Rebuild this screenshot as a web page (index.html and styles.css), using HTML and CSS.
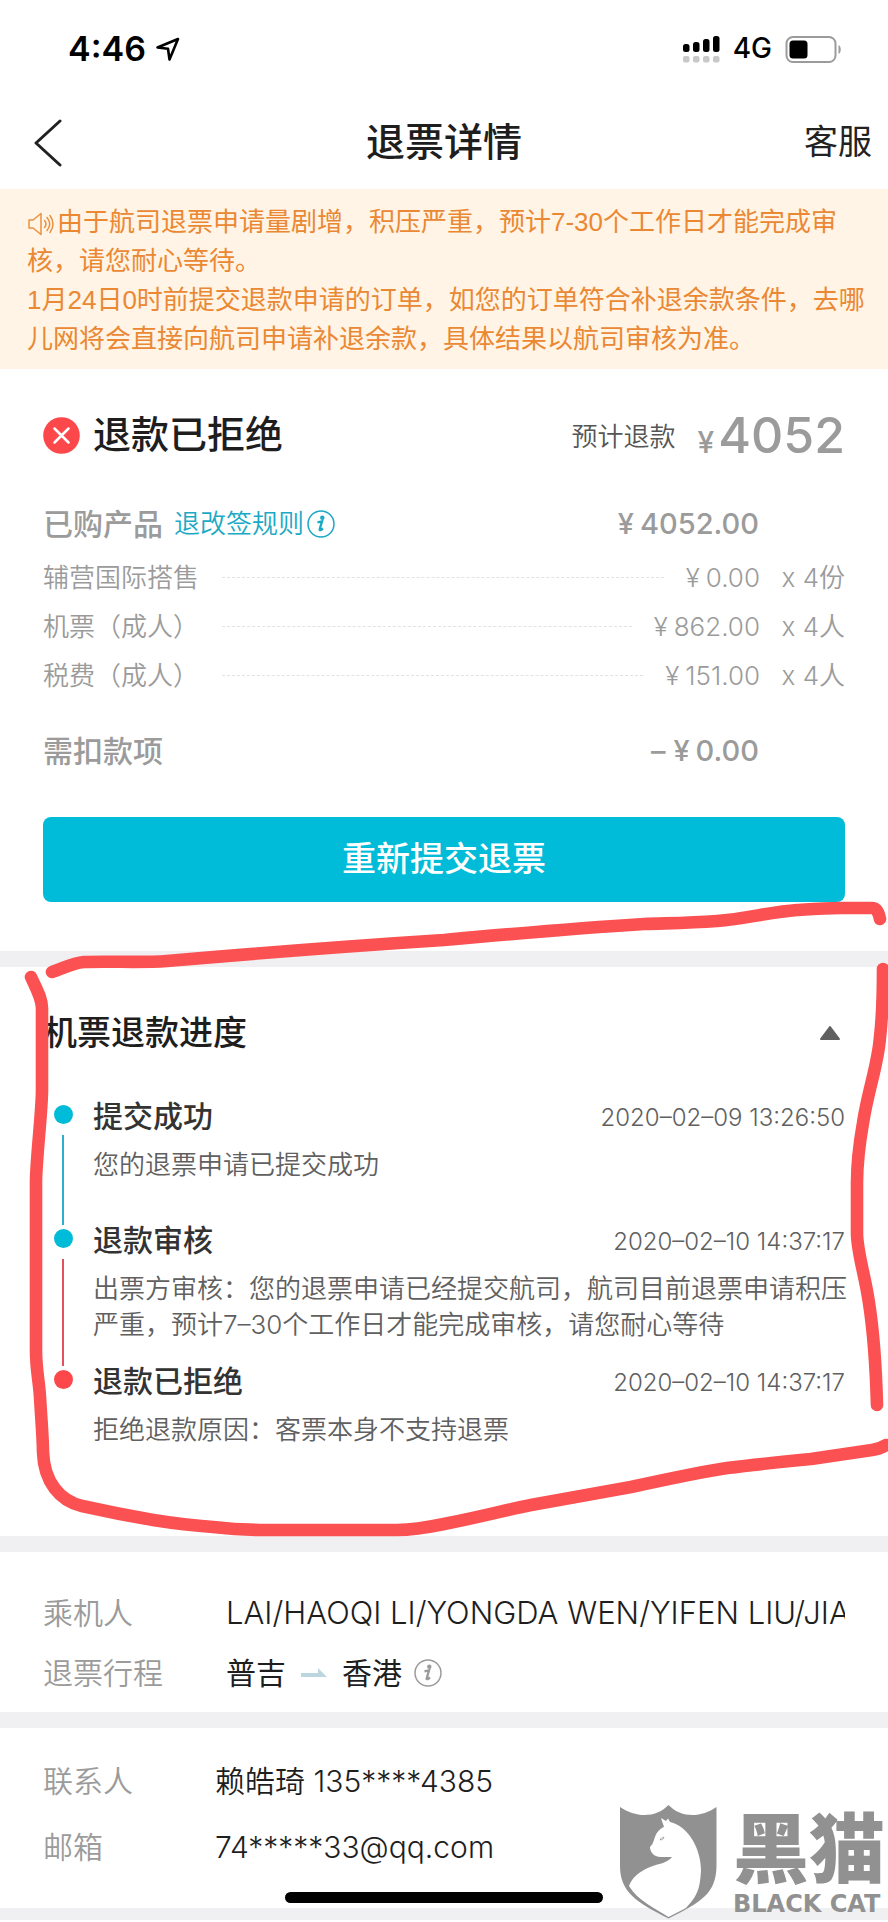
FILE: index.html
```html
<!DOCTYPE html>
<html lang="zh-CN">
<head>
<meta charset="utf-8">
<meta name="viewport" content="width=device-width, initial-scale=1">
<title>退票详情</title>
<link rel="stylesheet" href="styles.css">
</head>
<body>
<div class="page">
  <div class="statusbar">
    <div class="status-left">
      <span class="clock">4:46</span>
      <svg class="locate" width="24" height="24" viewBox="0 0 24 24" fill="none" stroke="#000" stroke-width="2.6" stroke-linejoin="round"><path d="M1.500 10.500 22 2 13.500 22.500 12 11.800Z"/></svg>
    </div>
    <div class="status-right">
      <svg width="38" height="28" viewBox="0 0 38 28"><g fill="#000"><rect x="1" y="9" width="6.500" height="8" rx="2.500"/><rect x="11" y="7" width="6.500" height="10" rx="2.500"/><rect x="21" y="4" width="6.500" height="13" rx="2.500"/><rect x="31" y="1" width="6.500" height="16" rx="2.500"/></g><g fill="#c8c8c8"><rect x="1" y="21" width="6.500" height="6.500" rx="2"/><rect x="11" y="21" width="6.500" height="6.500" rx="2"/><rect x="21" y="21" width="6.500" height="6.500" rx="2"/><rect x="31" y="21" width="6.500" height="6.500" rx="2"/></g></svg>
      <span class="network">4G</span>
      <svg width="57" height="28" viewBox="0 0 57 28"><rect x="1.500" y="2" width="49" height="25" rx="6.500" fill="none" stroke="#9b9b9b" stroke-width="2"/><rect x="4.500" y="5.500" width="18" height="18" rx="3.500"/><path d="M53.500 10c3 1 3 8 0 9z" fill="#9b9b9b"/></svg>
    </div>
  </div>

  <header class="nav">
    <button class="back" type="button" aria-label="返回"><svg width="30" height="50" viewBox="0 0 30 50" fill="none" stroke="#222" stroke-width="3" stroke-linecap="round" stroke-linejoin="round"><path d="M26 3 2 25 26 47"/></svg></button>
    <h1 class="nav-title">退票详情</h1>
    <a class="service" href="#">客服</a>
  </header>

  <div class="notice">
    <p><svg class="horn" width="30" height="24" viewBox="0 0 30 24" fill="none" stroke="#e8913f" stroke-width="1.500" stroke-linejoin="round" stroke-linecap="round"><path d="M2 8h4l8-6.500v21L6 16H2zM17.500 8.500q3 3.500 0 7M20 5.500q5.500 6.500 0 13M23 3.500q6 8.500 0 17"/></svg>由于航司退票申请量剧增，积压严重，预计7-30个工作日才能完成审核，请您耐心等待。</p>
    <p>1月24日0时前提交退款申请的订单，如您的订单符合补退余款条件，去哪儿网将会直接向航司申请补退余款，具体结果以航司审核为准。</p>
  </div>

  <main>
    <section class="refund">
      <div class="result">
        <svg width="37" height="37" viewBox="0 0 37 37"><circle cx="18.500" cy="18.500" r="18.300" fill="#fc474b"/><path d="m11.500 11.500 14 14m0-14-14 14" stroke="#fff" stroke-width="2.500" stroke-linecap="round"/></svg>
        <h2 class="result-title">退款已拒绝</h2>
        <span class="estimate">预计退款</span>
        <span class="total"><span class="total-yen">¥</span>4052</span>
      </div>

      <div class="sum products">
        <span class="sum-label">已购产品</span>
        <a class="rules" href="#">退改签规则<svg width="28" height="28" viewBox="0 0 28 28"><circle cx="14" cy="14" r="13" fill="none" stroke="currentColor" stroke-width="1.500"/><circle cx="15.300" cy="7.800" r="2.200" fill="currentColor"/><path d="M10.500 12.300q2.500-.3 4.500-.9l-2.300 8q-.2 1.800 3.300-.9" fill="none" stroke="currentColor" stroke-width="2.400"/></svg></a>
        <span class="sum-value"><span class="yen">¥</span>4052.00</span>
      </div>
      <div class="item"><span class="item-name">辅营国际搭售</span><span class="leader"></span><span class="item-price"><span class="yen">¥</span>0.00</span><span class="item-count">x 4份</span></div>
      <div class="item"><span class="item-name">机票（成人）</span><span class="leader"></span><span class="item-price"><span class="yen">¥</span>862.00</span><span class="item-count">x 4人</span></div>
      <div class="item"><span class="item-name">税费（成人）</span><span class="leader"></span><span class="item-price"><span class="yen">¥</span>151.00</span><span class="item-count">x 4人</span></div>
      <div class="sum deduct">
        <span class="sum-label">需扣款项</span>
        <span class="sum-value">–<span class="yen yen-after">¥</span>0.00</span>
      </div>
      <button class="resubmit" type="button">重新提交退票</button>
    </section>

    <section class="progress">
      <div class="progress-head">
        <h2>机票退款进度</h2>
        <button class="fold" type="button" aria-label="收起"><svg width="22" height="16" viewBox="0 0 22 16"><path d="M11 2 2 14h18z" fill="#606060" stroke="#606060" stroke-width="2" stroke-linejoin="round"/></svg></button>
      </div>
      <ol class="steps">
        <li class="step">
          <div class="track"><i class="dot"></i><i class="line"></i></div>
          <div class="step-body">
            <div class="step-top"><h3>提交成功</h3><time>2020–02–09 13:26:50</time></div>
            <p>您的退票申请已提交成功</p>
          </div>
        </li>
        <li class="step">
          <div class="track"><i class="dot"></i><i class="line line-red"></i></div>
          <div class="step-body">
            <div class="step-top"><h3>退款审核</h3><time>2020–02–10 14:37:17</time></div>
            <p>出票方审核：您的退票申请已经提交航司，航司目前退票申请积压严重，预计7–30个工作日才能完成审核，请您耐心等待</p>
          </div>
        </li>
        <li class="step">
          <div class="track"><i class="dot dot-red"></i></div>
          <div class="step-body">
            <div class="step-top"><h3>退款已拒绝</h3><time>2020–02–10 14:37:17</time></div>
            <p>拒绝退款原因：客票本身不支持退票</p>
          </div>
        </li>
      </ol>
      <svg class="marker" viewBox="0 890 888 660" preserveAspectRatio="none" fill="none" stroke="#fb5152" stroke-width="12.600" stroke-linecap="round" stroke-linejoin="round" aria-hidden="true">
        <path d="M52 972C62 969 72 963 84 962C112 961 140 963 167 961C260 953 350 946 444 940C510 934 580 928 644 924C675 923 690 923 717 921C745 919 770 912 797 910C812 909 825 908 841 908H872Q878 908 880 919"/>
        <path d="M31 977C36 988 42 998 42 1008V1090C42 1112 36 1160 36 1183V1350C36 1370 39 1380 40 1397C42 1430 43 1440 43 1452C44 1482 60 1501 82 1506Q118 1514 153 1520Q185 1525 213 1527Q240 1530 267 1530H397Q415 1530 444 1524C490 1515 505 1510 531 1505L631 1487Q700 1472 727 1468Q760 1464 811 1459L872 1450Q880 1449 886 1445"/>
        <path d="M883 969C883 1000 882 1020 880 1037C878 1065 868 1090 863 1123C860 1140 857 1165 857 1183V1233C857 1252 865 1275 869 1303C874 1335 876 1370 877 1405"/>
      </svg>
    </section>

    <section class="trip">
      <dl>
        <div class="field"><dt>乘机人</dt><dd class="names">LAI/HAOQI LI/YONGDA WEN/YIFEN LIU/JIA</dd></div>
        <div class="field"><dt>退票行程</dt><dd class="route">普吉<svg class="arrow" width="26" height="10" viewBox="0 0 26 10"><path d="M0 5h17V0l9 9H0z" fill="#bbd6df"/></svg>香港<svg class="info" width="28" height="28" viewBox="0 0 28 28"><circle cx="14" cy="14" r="13" fill="none" stroke="currentColor" stroke-width="1.500"/><circle cx="15.300" cy="7.800" r="2.200" fill="currentColor"/><path d="M10.500 12.300q2.500-.3 4.500-.9l-2.300 8q-.2 1.800 3.300-.9" fill="none" stroke="currentColor" stroke-width="2.400"/></svg></dd></div>
      </dl>
    </section>

    <section class="contact">
      <dl>
        <div class="field"><dt>联系人</dt><dd>赖皓琦 135****4385</dd></div>
        <div class="field"><dt>邮箱</dt><dd>74*****33@qq.com</dd></div>
      </dl>
    </section>
  </main>

  <div class="home-bar"></div>
  <div class="watermark">
    <svg width="98" height="116" viewBox="0 0 98 116"><path d="M1 3C17 14 37 14 49.500 1C62 14 82 14 97.500 3V62C97 90 82 98 49.500 114.500C17 98 1 88 1 62Z" fill="#929191"/><path d="M42 14 47 17 49 14.500 51 18C70 22 82 46 82 66C81 86 78 92 67 104L49.500 113C36 104 19 97 10 82C16 66 36 61 44 59Q51 56 53 53H42C34 53 31 47 31 43Q34 40 35 36C37 29 40 25 45 23Z" fill="#fff"/><path d="M40 36q2-4 6-4-1 5-4 5zM43 33v4" fill="#929191" stroke="#fff" stroke-width="1"/></svg>
    <div class="wordmark"><span class="word-cn">黑猫</span><span class="word-en">BLACK CAT</span></div>
  </div>
</div>
</body>
</html>
```
FILE: styles.css
```css
* { box-sizing: border-box; }
body, h1, h2, h3, p, ol, dl, dd { margin: 0; padding: 0; }
body {
  background: #fff;
  color: #1e1e1e;
  font-family: Inter, "Noto Sans CJK SC", sans-serif;
  font-size: 26px;
  line-height: 1.2;
}
ol { list-style: none; }
svg { flex: none; display: block; }
a { text-decoration: none; }
button { border: 0; padding: 0; background: none; font-family: inherit; line-height: inherit; color: inherit; }

.page { position: relative; overflow: hidden; background: #f0f0f2; padding-bottom: 12px; }

.statusbar {
  display: flex; justify-content: space-between; align-items: center;
  height: 96px; padding: 2px 46px 0 68px; background: #fff; color: #000;
}
.status-left, .status-right { display: flex; align-items: center; }
.status-left { gap: 10px; }
.status-right { gap: 13px; }
.clock { font-size: 34px; font-weight: 600; }
.network { font-size: 28px; font-weight: 500; }

.nav {
  display: grid; grid-template-columns: 1fr auto 1fr; align-items: center;
  height: 93px; padding: 0 16px; background: #fff;
}
.back { justify-self: start; margin-left: 18px; }
.nav-title { font-size: 39px; font-weight: 500; }
.service { justify-self: end; font-size: 34px; color: #222; }

.notice {
  padding: 14px 22px 10px 27px; background: #fff4e5; color: #ea8833;
  font-family: "Liberation Sans", "Noto Sans CJK SC", sans-serif;
  font-weight: 400; line-height: 39px;
}
.horn { display: inline-block; vertical-align: -5px; }

section { background: #fff; padding: 0 43px; }
section + section { margin-top: 16px; }

.refund { padding-top: 34px; padding-bottom: 49px; color: #9b9b9b; }
.result { display: flex; align-items: center; height: 64px; }
.result-title { flex: 1; margin-left: 13px; font-size: 38px; font-weight: 500; color: #1e1e1e; }
.estimate { padding-top: 4px; color: #555; font-weight: 350; }
.total { margin-left: 22px; font-size: 50px; font-weight: 500; }
.total-yen { font-size: 30px; margin-right: 4px; }
.sum { display: flex; align-items: center; height: 48px; padding-right: 86px; font-size: 30px; font-weight: 500; }
.products { margin: 33px 0 5px; }
.rules { display: flex; align-items: center; gap: 3px; margin-left: 11px; font-size: 26px; font-weight: 350; color: #1ba9c4; }
.sum-value { margin-left: auto; font-size: 29px; }
.yen { margin-right: 6px; }
.yen-after { margin-left: 8px; }
.item { display: flex; align-items: center; height: 49px; font-weight: 350; }
.item-name { width: 179px; }
.leader { flex: 1; border-top: 1px dashed #e2e2e2; margin-right: 22px; }
.item-count { width: 85px; text-align: right; white-space: nowrap; }
.deduct { margin-top: 27px; }
.resubmit {
  display: block; width: 100%; height: 85px; margin-top: 42px;
  border-radius: 8px; background: #00bcd8; color: #fff; font-size: 34px; font-weight: 500;
}

.progress { position: relative; padding-top: 41px; padding-bottom: 65px; }
.progress-head { display: flex; justify-content: space-between; align-items: center; height: 50px; padding-right: 4px; }
.progress-head h2 { font-size: 34px; font-weight: 500; }
.steps { margin-top: 43px; }
.step { display: flex; min-height: 124px; }
.step:last-child { min-height: 0; }
.track { display: flex; flex-direction: column; align-items: center; width: 40px; }
.dot { width: 19px; height: 19px; margin-top: 4px; border-radius: 50%; background: #00bcd8; }
.dot-red { background: #fc474b; }
.line { flex: 1; width: 2px; margin-top: 11px; background: #2fb0c8; }
.line-red { background: #e2525c; }
.step-body { flex: 1; padding: 0 0 23px 10px; }
.step-top { display: flex; justify-content: space-between; align-items: center; height: 30px; margin-bottom: 16px; }
.step h3 { font-size: 30px; font-weight: 500; color: #333; }
.step time { padding-top: 4px; font-size: 24px; font-weight: 350; color: #606060; }
.step p { margin-right: -4px; line-height: 36px; font-weight: 350; color: #606060; }
.marker { position: absolute; left: 0; top: -77px; width: 100%; height: 660px; pointer-events: none; z-index: 1; }

.trip { padding-top: 31px; padding-bottom: 9px; }
.contact { padding-top: 20px; padding-bottom: 28px; }
.field { display: flex; align-items: center; height: 60px; font-size: 30px; font-weight: 350; }
.contact .field { height: 66px; }
.field dt { flex: none; width: 183px; color: #9b9b9b; }
.contact dt { width: 172px; }
.names { flex: 1; overflow: hidden; white-space: nowrap; font-size: 31px; }
.route { display: flex; align-items: center; font-weight: 400; }
.arrow { margin: 0 15px; }
.info { margin-left: 12px; color: #9b9b9b; }

.home-bar { position: absolute; bottom: 17px; left: 50%; width: 318px; height: 11px; margin-left: -159px; border-radius: 6px; background: #000; }
.watermark { position: absolute; right: 3px; bottom: 0; display: flex; gap: 16px; color: #929191; }
.wordmark { display: flex; flex-direction: column; padding-top: 4px; }
.word-cn { font-size: 76px; font-weight: 900; line-height: 82px; }
.word-en { font-family: "DejaVu Sans", sans-serif; font-size: 24px; font-weight: 700; line-height: 28px; white-space: nowrap; }
```
